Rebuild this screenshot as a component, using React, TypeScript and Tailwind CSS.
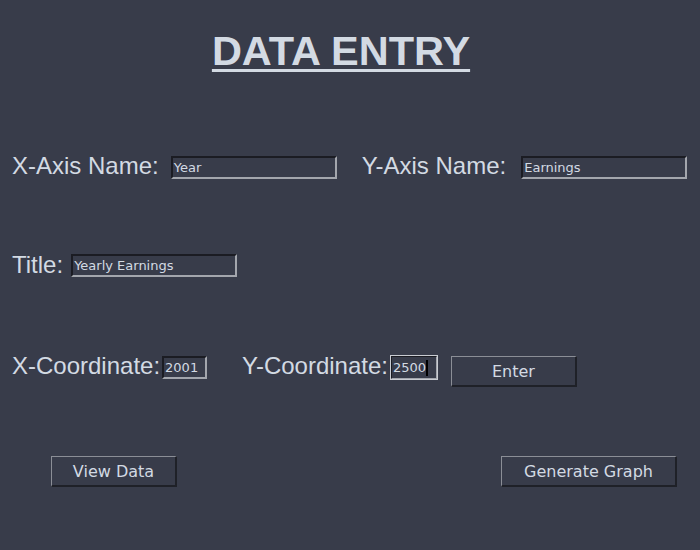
import React from 'react';

const label = "font-['Liberation_Sans',Arial,sans-serif] text-[24px] leading-[24px] text-[#d3dae3] whitespace-nowrap";
const field =
  "flex items-center h-[23px] pl-[1px] bg-[#383c4a] border-2 border-t-[#1b1c23] border-l-[#1b1c23] border-b-[#a3a6ad] border-r-[#a3a6ad] font-['DejaVu_Sans',sans-serif] text-[13px] text-[#d3dae3] whitespace-nowrap overflow-hidden";
const button =
  "flex items-center justify-center h-[31px] pt-[1px] bg-[#383c4a] border-t border-l border-b-2 border-r-2 border-t-[#8b8e96] border-l-[#8b8e96] border-b-[#1f2128] border-r-[#1f2128] font-['DejaVu_Sans',sans-serif] text-[16px] text-[#d3dae3]";

export default function App() {
  return (
    <div className="w-[700px] h-[550px] bg-[#383c4a] flex flex-col overflow-hidden">
      {/* Heading */}
      <div className="flex justify-center pr-[18px] mt-[30px]">
        <h1 className="font-['Liberation_Sans',Arial,sans-serif] font-bold text-[41.5px] leading-[42px] text-[#d3dae3] underline decoration-[3px] underline-offset-[4px]">
          DATA ENTRY
        </h1>
      </div>

      {/* Axis names */}
      <div className="flex items-start pl-[12px] mt-[82px]">
        <span className={label}>X-Axis Name:</span>
        <div className={`${field} ml-[12px] mt-[2px] w-[166px]`}>Year</div>
        <span className={`${label} ml-[25px]`}>Y-Axis Name:</span>
        <div className={`${field} ml-[15px] mt-[2px] w-[166px]`}>Earnings</div>
      </div>

      {/* Title */}
      <div className="flex items-start pl-[12px] mt-[74px]">
        <span className={label}>Title:</span>
        <div className={`${field} ml-[8px] mt-[1px] w-[166px]`}>Yearly Earnings</div>
      </div>

      {/* Coordinates */}
      <div className="flex items-start pl-[12px] mt-[77px]">
        <span className={label}>X-Coordinate:</span>
        <div className={`${field} ml-[2px] mt-[2px] w-[45px]`}>2001</div>
        <span className={`${label} ml-[35px]`}>Y-Coordinate:</span>
        <div className="ml-[2px] mt-[1px] w-[48px] h-[25px] border border-[#c9ccd2]">
          <div className="flex items-center h-full pl-[1px] border border-t-[#1b1c23] border-l-[#1b1c23] border-b-[#a3a6ad] border-r-[#a3a6ad] font-['DejaVu_Sans',sans-serif] text-[13px] text-[#d3dae3]">
            2500
            <span className="w-[2px] h-[16px] bg-black shrink-0" />
          </div>
        </div>
        <button className={`${button} ml-[13px] mt-[2px] w-[126px]`}>Enter</button>
      </div>

      {/* Actions */}
      <div className="flex items-start mt-[69px]">
        <button className={`${button} ml-[51px] w-[126px]`}>View Data</button>
        <button className={`${button} ml-[324px] w-[176px]`}>Generate Graph</button>
      </div>
    </div>
  );
}
